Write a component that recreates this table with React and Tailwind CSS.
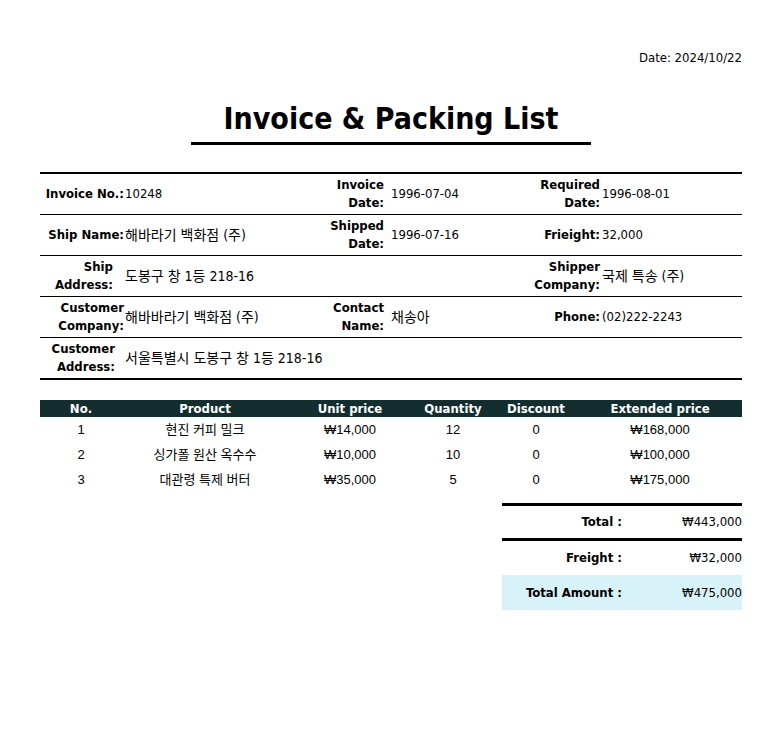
import React from "react";

// ko: Korean strings are set a touch larger, as in the printed form
const info = [
  [
    { label: "Invoice No.:", value: "10248" },
    { label: "Invoice Date:", value: "1996-07-04" },
    { label: "Required Date:", value: "1996-08-01" },
  ],
  [
    { label: "Ship Name:", value: "해바라기 백화점 (주)", ko: true },
    { label: "Shipped Date:", value: "1996-07-16" },
    { label: "Frieight:", value: "32,000" },
  ],
  [
    { label: "Ship Address:", value: "도봉구 창 1등 218-16", pad: "pr-[11px]", ko: true },
    { label: "", value: "" },
    { label: "Shipper Company:", value: "국제 특송 (주)", ko: true },
  ],
  [
    { label: "Customer Company:", value: "해바바라기 백화점 (주)", ko: true },
    { label: "Contact Name:", value: "채송아", ko: true },
    { label: "Phone:", value: "(02)222-2243" },
  ],
  [
    { label: "Customer Address:", value: "서울특별시 도봉구 창 1등 218-16", pad: "pr-[9px]", ko: true },
    { label: "", value: "" },
    { label: "", value: "" },
  ],
];

const items = [
  { no: 1, name: "현진 커피 밀크", price: "₩14,000", qty: 12, disc: 0, ext: "₩168,000" },
  { no: 2, name: "싱가폴 원산 옥수수", price: "₩10,000", qty: 10, disc: 0, ext: "₩100,000" },
  { no: 3, name: "대관령 특제 버터", price: "₩35,000", qty: 5, disc: 0, ext: "₩175,000" },
];

const cols = "grid grid-cols-[82px_166px_124px_82px_84px_164px]";

function Value({ cell, className }) {
  return (
    <div className={`whitespace-nowrap ${cell.ko ? "text-[14px]" : "text-[13px]"} ${className}`}>
      {cell.value}
    </div>
  );
}

export default function App() {
  return (
    <div className="min-h-screen bg-white text-black font-['DejaVu_Sans_Condensed','DejaVu_Sans','Noto_Sans_CJK_KR',sans-serif]">
      <div className="ml-[40px] w-[702px] pt-[50px]">
        {/* Date */}
        <div className="text-right text-[13px] leading-[16px]">Date: 2024/10/22</div>

        {/* Title */}
        <div className="flex flex-col items-center mt-[35px]">
          <h1 className="text-[30px] font-bold leading-[36px]">Invoice &amp; Packing List</h1>
          <div className="w-[400px] h-[3px] bg-black mt-[5px]" />
        </div>

        {/* Info table */}
        <div className="mt-[27px] border-t-2 border-b-2 border-black text-[13px] leading-[18px]">
          {info.map((row, i) => (
            <div
              key={i}
              className={`grid grid-cols-[84px_176px_84px_150px_66px_142px] items-center ${
                i < info.length - 1 ? "h-[41px] border-b border-black" : "h-[40px]"
              }`}
            >
              <div className={`text-right font-bold ${row[0].pad || ""}`}>{row[0].label}</div>
              <Value cell={row[0]} className="pl-[1px]" />
              <div className="text-right font-bold">{row[1].label}</div>
              <Value cell={row[1]} className="pl-[7px]" />
              <div className="text-right font-bold">{row[2].label}</div>
              <Value cell={row[2]} className="pl-[2px]" />
            </div>
          ))}
        </div>

        {/* Items */}
        <div className="mt-[20px]">
          <div className={`${cols} h-[17px] bg-[#142e30] text-white font-bold text-[13px] leading-[17px] text-center`}>
            <div>No.</div>
            <div>Product</div>
            <div>Unit price</div>
            <div>Quantity</div>
            <div>Discount</div>
            <div>Extended price</div>
          </div>
          {items.map((it) => (
            <div
              key={it.no}
              className={`${cols} h-[25px] items-center text-center text-[13px] font-['Liberation_Sans','Noto_Sans_CJK_KR',sans-serif]`}
            >
              <div>{it.no}</div>
              <div>{it.name}</div>
              <div>{it.price}</div>
              <div>{it.qty}</div>
              <div>{it.disc}</div>
              <div>{it.ext}</div>
            </div>
          ))}
        </div>

        {/* Totals */}
        <div className="mt-[11px] ml-auto w-[240px] text-[13px]">
          <div className="grid grid-cols-[120px_120px] h-[38px] items-center border-t-[3px] border-b-[3px] border-black">
            <div className="text-right font-bold">Total :</div>
            <div className="text-right">₩443,000</div>
          </div>
          <div className="grid grid-cols-[120px_120px] h-[34px] items-center">
            <div className="text-right font-bold">Freight :</div>
            <div className="text-right">₩32,000</div>
          </div>
          <div className="grid grid-cols-[120px_120px] h-[35px] items-center bg-[#d7f3f9]">
            <div className="text-right font-bold">Total Amount :</div>
            <div className="text-right">₩475,000</div>
          </div>
        </div>
      </div>
    </div>
  );
}
